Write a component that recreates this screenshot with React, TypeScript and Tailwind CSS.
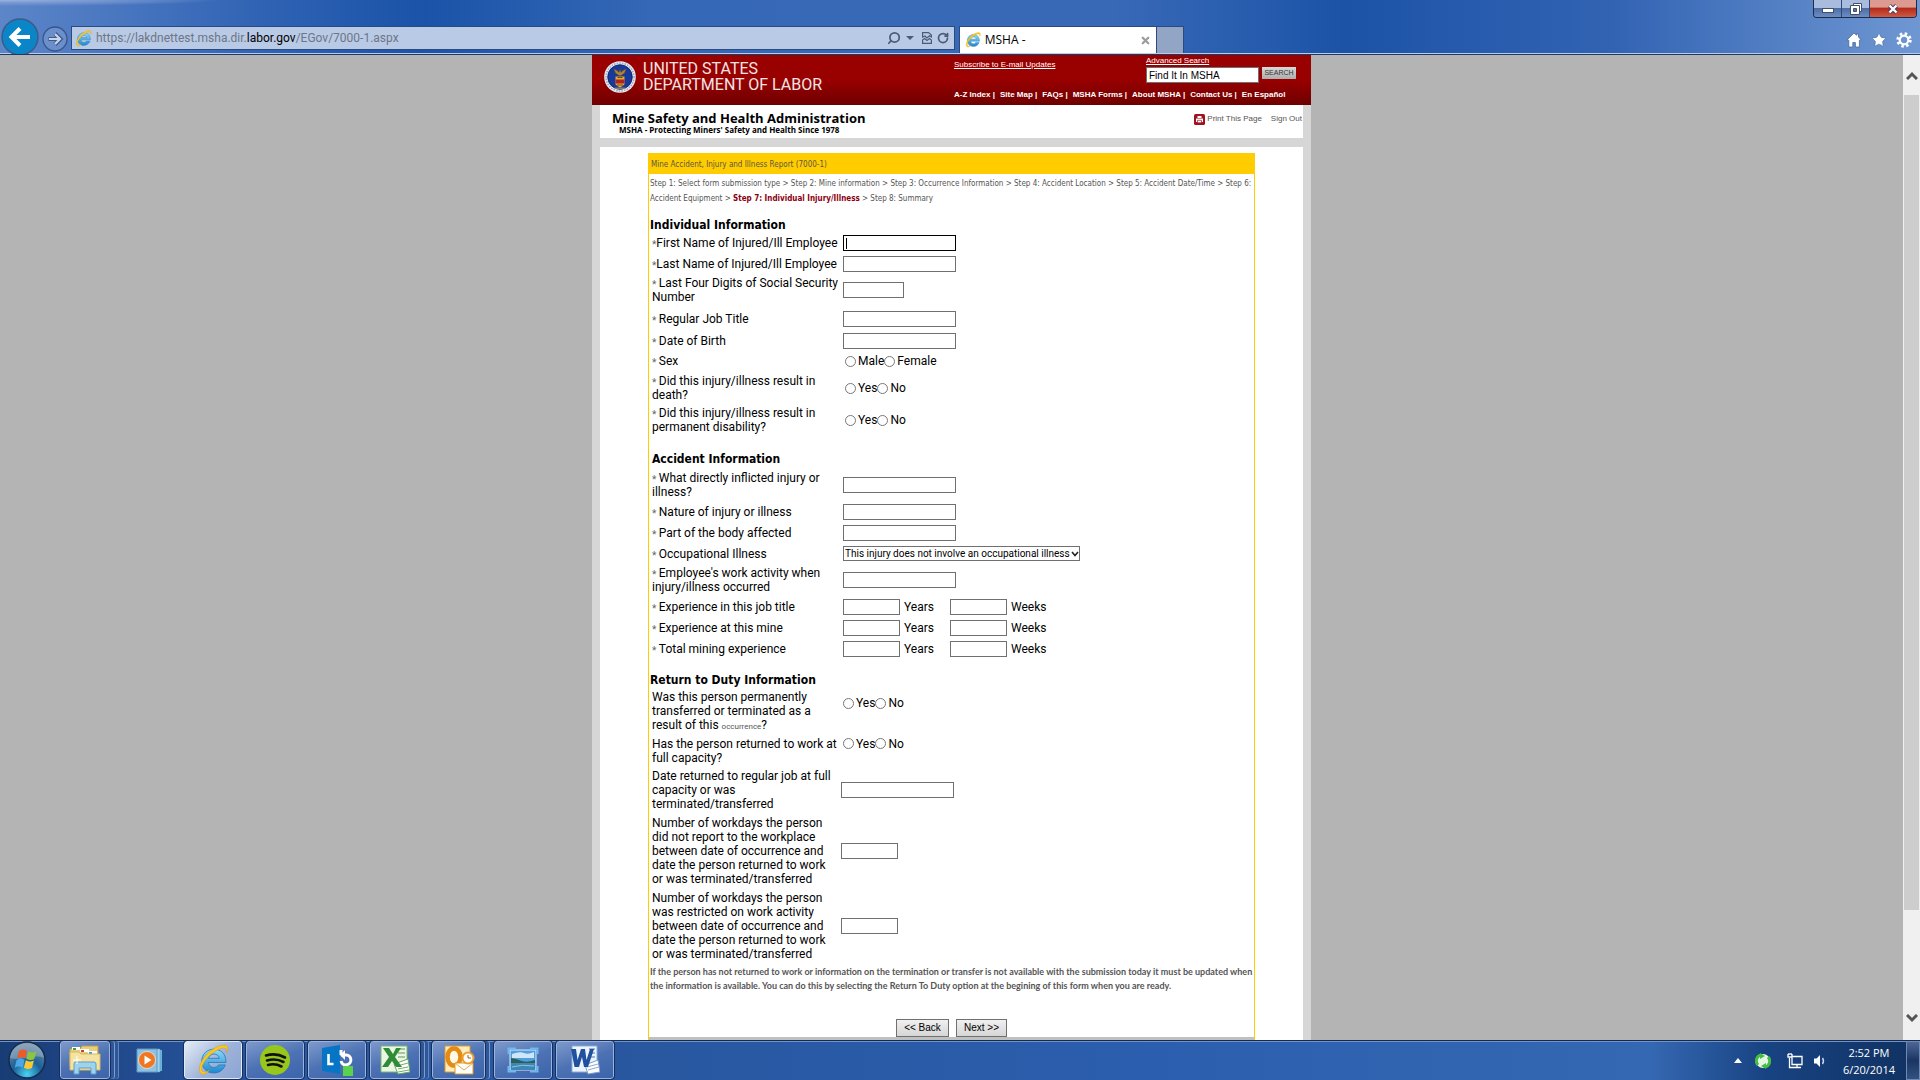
import React from 'react';
import { Search, RotateCw, Star, X } from 'lucide-react';

const injuryTextFields = 'h-4 border border-[#707070] bg-white px-1 text-[11px] outline-none';

function IeLogo({ className }: { className: string }) {
  return (
    <svg viewBox="0 0 32 32" className={className} aria-hidden="true">
      <defs>
        <linearGradient id="ieBlue" x1="0" y1="0" x2="0" y2="1">
          <stop offset="0" stopColor="#8fdcf8" />
          <stop offset="1" stopColor="#1d86cf" />
        </linearGradient>
      </defs>
      <path
        d="M29 18.5H11.5c.3 3 2.400 4.900 5.300 4.900 2.100 0 3.700-.9 4.700-2.500h6.800C26.500 26 22.200 29 16.700 29 9.800 29 4.700 24 4.700 17.200 4.700 10.300 9.900 5.200 16.800 5.200c7.500 0 12.400 5.300 12.200 13.300zM22.300 14.300c-.4-2.600-2.500-4.300-5.300-4.300s-4.900 1.700-5.400 4.300z"
        fill="url(#ieBlue)"
        stroke="#2779b8"
        strokeWidth="0.800"
      />
      <path
        d="M5 30C-1 27 4 14.500 13.500 7 20.500 1.500 28.500-.5 30.300 2.600c1 1.700.3 4-1 6.200.5-2.300.3-3.900-1-4.500-2.800-1.300-9 1.500-14.300 6C6.500 16.500 2.500 25.500 5.800 27.600c1.500.9 4 .1 6.700-1.400C9.700 29 7 30.900 5 30z"
        fill="#fcc81c"
        stroke="#d99b10"
        strokeWidth="0.500"
      />
    </svg>
  );
}

function LaborSeal() {
  return (
    <svg viewBox="0 0 32 32" className="size-8 shrink-0" aria-hidden="true">
      <circle cx="16" cy="16" r="15.800" fill="#e9ecf5" />
      <circle cx="16" cy="16" r="14" fill="none" stroke="#9aa3c4" strokeWidth="1.500" strokeDasharray="1.500 1.200" />
      <circle cx="16" cy="16" r="12.300" fill="#173a9a" stroke="#101c50" strokeWidth="0.800" />
      <path d="M10 8l3 1.500 2 2 1-3 1 3 2-2 3-1.500-1.500 4-3.500 2.500h-2L11.500 12z" fill="#b5842f" stroke="#70480f" strokeWidth="0.400" />
      <path d="M11.500 15.500h9V23c0 1-2 1.800-4.500 3.500-2.500-1.700-4.500-2.500-4.500-3.500z" fill="#e0a92f" />
      <path d="M11.500 18.500h9v4h-9z" fill="#b8202c" />
      <path d="M13.500 16.500h5M13 20h2m2 1h2M13 24h6" stroke="#6c4212" strokeWidth="0.900" />
      <path d="M10.500 27.200h11" stroke="#c9a24d" strokeWidth="1" />
    </svg>
  );
}

function PrinterIcon() {
  return (
    <svg viewBox="0 0 11 11" className="h-[11px] w-[11px]" aria-hidden="true">
      <rect width="11" height="11" rx="1.500" fill="#a31120" />
      <path d="M3.500 2h4v2h-4z" fill="#fff" />
      <path d="M2 4.500h7V8H2z" fill="#fff" />
      <path d="M3.500 6.300h4v2.500h-4z" fill="#fff" stroke="#a31120" strokeWidth="0.700" />
    </svg>
  );
}

function Browser() {
  return (
    <header className="relative flex h-[55px] shrink-0 items-end overflow-hidden border-b border-[#1f3864] bg-[radial-gradient(ellipse_at_0%_0%,#9bb3e0_0,#7a9ad3_90px,transparent_220px),linear-gradient(90deg,#5d86c9_0%,#2f62b3_14%,#1a53a8_22%,#3568b6_34%,#3869b7_58%,#1c53a7_70%,#3263b3_84%,#6f97d2_100%)]">
      <div className="flex h-7 w-full items-stretch border-b border-[#b9cdeb]">
        <button aria-label="Back" className="relative w-10 shrink-0">
          <svg viewBox="0 0 38 38" className="absolute -top-2 left-px size-[38px]" aria-hidden="true">
            <circle cx="19" cy="19" r="18" fill="#0a86c8" stroke="#405a86" strokeWidth="1.500" />
            <path d="M29 19H11M19 10.500L10.500 19l8.500 8.500" fill="none" stroke="#fff" strokeWidth="4" />
          </svg>
        </button>
        <button aria-label="Forward" className="flex w-7 shrink-0 justify-end">
          <svg viewBox="0 0 26 26" className="size-[26px]" aria-hidden="true">
            <circle cx="13" cy="13" r="12" fill="#7f9fd4" fillOpacity="0.500" stroke="#3a5488" strokeWidth="1.300" />
            <path d="M6.500 13h11M13 7.500l5.500 5.500-5.500 5.500" fill="none" stroke="#405a86" strokeWidth="4.200" />
            <path d="M7 13h11M13 8l5 5-5 5" fill="none" stroke="#c6d5ee" strokeWidth="2.200" />
          </svg>
        </button>
        <div className="ml-[3px] flex h-6 min-w-0 flex-[879] items-center border border-[#2b4a7f] bg-[#b9cae7] pl-[3px] pr-[5px] text-[#4b5b78]">
          <IeLogo className="size-[17px]" />
          <div
            role="textbox"
            aria-label="Address"
            contentEditable
            suppressContentEditableWarning
            className="ml-1 flex-1 overflow-hidden whitespace-nowrap font-[Roboto,'Open_Sans',sans-serif] text-[12px] leading-4 text-[#6d7685] outline-none"
          >
            https://lakdnettest.msha.dir.<span className="text-black">labor.gov</span>/EGov/7000-1.aspx
          </div>
          <button aria-label="Search"><Search className="size-[14px] -scale-x-100" strokeWidth={3} /></button>
          <button aria-label="Show address list" className="ml-[5px]">
            <svg viewBox="0 0 8 4" className="h-1 w-2"><path d="M0 0h8L4 4z" fill="currentColor" /></svg>
          </button>
          <button aria-label="Compatibility view" className="ml-[8px]">
            <svg viewBox="0 0 10 12" className="h-3 w-[10px]" fill="none" stroke="currentColor" strokeWidth="1.200">
              <path d="M.6 5V.6h6L9.400 3v2L7.500 3.800 5 6 3 4zM.6 8l2-1.500L5 8.500l2.500-2 1.900 1.500v3.400H.6z" />
            </svg>
          </button>
          <button aria-label="Refresh" className="ml-[5px]"><RotateCw className="size-3" strokeWidth={3.500} /></button>
        </div>
        <div className="ml-1 flex flex-[227] items-stretch">
          <div className="flex flex-1 items-center border border-b-0 border-[#2b4a7f] bg-white pl-[5px] pr-[5px]">
            <IeLogo className="size-4" />
            <span className="ml-1 flex-1 font-['Open_Sans','Noto_Sans',sans-serif] text-[12px] text-black">MSHA -</span>
            <button aria-label="Close tab"><X className="size-[11px] text-[#9d9d9d]" strokeWidth={5} /></button>
          </div>
          <button aria-label="New tab" className="w-[27px] border border-b-0 border-l-0 border-[#2b4a7f] bg-[#93a5c4]" />
        </div>
        <div className="flex flex-[732] items-center justify-end gap-[9px] pr-2 text-white">
          <button aria-label="Home">
            <svg viewBox="0 0 16 16" className="size-4">
              <path d="M8 1L.8 8.200h2V15h4v-4.500h2.600V15h4V8.200h2L12.500 5V2h-2v1.200z" fill="#fff" stroke="#4a689f" strokeWidth="0.800" />
            </svg>
          </button>
          <button aria-label="Favorites"><Star className="size-4 stroke-[#4a689f]" fill="white" strokeWidth={1} /></button>
          <button aria-label="Tools">
            <svg viewBox="0 0 16 16" className="size-4" fill="none">
              <circle cx="8" cy="8" r="6.200" stroke="#fff" strokeWidth="3" strokeDasharray="2.430 2.430" />
              <circle cx="8" cy="8" r="4.300" stroke="#fff" strokeWidth="2.200" />
            </svg>
          </button>
        </div>
      </div>
      <div className="absolute right-[3px] top-0 flex h-[18px] w-[104px] overflow-hidden rounded-b border border-t-0 border-[#1d2c4c]">
        <button aria-label="Minimize" className="flex w-7 items-center justify-center border-r border-[#304774] bg-[linear-gradient(#a9bcdd_45%,#4d6da6_50%,#6d8dc2)]">
          <svg viewBox="0 0 12 5" className="mt-1 h-[5px] w-3"><rect x=".5" y=".5" width="11" height="4" fill="#fff" stroke="#44506b" /></svg>
        </button>
        <button aria-label="Restore" className="flex w-7 items-center justify-center border-r border-[#304774] bg-[linear-gradient(#a9bcdd_45%,#4d6da6_50%,#6d8dc2)]">
          <svg viewBox="0 0 12 12" className="size-3" fill="#fff" stroke="#44506b">
            <path d="M3.500.5h8v8h-8z" />
            <path d="M.5 2.500h9v9h-9z" />
            <path d="M3.500 5.500h3v3h-3z" fill="#5876ac" />
          </svg>
        </button>
        <button aria-label="Close" className="flex flex-1 items-center justify-center bg-[linear-gradient(#dc9a90_40%,#b42c1b_50%,#cf5a45)]">
          <svg viewBox="0 0 12 10" className="h-[10px] w-3">
            <path d="M2.500 1.500l7 7m0-7l-7 7" stroke="#44405a" strokeWidth="4.200" />
            <path d="M2.500 1.500l7 7m0-7l-7 7" stroke="#fff" strokeWidth="2.400" />
          </svg>
        </button>
      </div>
    </header>
  );
}

const siteLinks = ['A-Z Index', 'Site Map', 'FAQs', 'MSHA Forms', 'About MSHA', 'Contact Us', 'En Español'];

function SiteHeader() {
  return (
    <div className="flex h-[50px] shrink-0 justify-between bg-[linear-gradient(#990000_50%,#6e0000)] text-white">
      <div className="flex items-start pl-3 pt-[6px]">
        <LaborSeal />
        <div className="ml-[7px] font-[Roboto,sans-serif] text-[16px] leading-4 text-[#f4e4e4]">
          UNITED STATES
          <br />
          DEPARTMENT OF LABOR
        </div>
      </div>
      <div className="w-[357px] font-['Liberation_Sans',sans-serif]">
        <div className="flex justify-between pr-[15px]">
          <a href="#updates" className="mt-1 text-[8px] leading-3 underline">
            Subscribe to E-mail Updates
          </a>
          <div>
            <a href="#advanced" className="block text-[8px] leading-3 underline">
              Advanced Search
            </a>
            <div className="flex items-start gap-[3px]">
              <input
                aria-label="Search MSHA"
                defaultValue="Find It In MSHA"
                className="h-4 w-[113px] border border-[#707070] bg-white px-[2px] text-[10px] text-black outline-none"
              />
              <button className="h-3 w-[34px] bg-[linear-gradient(#d8d8d8,#adadad)] text-center text-[7px] leading-3 text-[#333]">
                SEARCH
              </button>
            </div>
          </div>
        </div>
        <nav className="mt-[6px] flex whitespace-nowrap text-[8px] font-bold leading-3">
          {siteLinks.map((link, i) => (
            <span key={link} className="mr-[5px]">
              <a href="#nav">{link}</a>
              {i < siteLinks.length - 1 && ' |'}
            </span>
          ))}
        </nav>
      </div>
    </div>
  );
}

type RowProps = {
  id?: string;
  label: React.ReactNode;
  height: string;
  required?: boolean;
  tight?: boolean;
  children: React.ReactNode;
};

function Row({ id, label, height, required, tight, children }: RowProps) {
  const content = (
    <>
      {required && <span className="align-[-1px] text-[10px] leading-none text-[#666]">{tight ? '*' : '* '}</span>}
      {label}
    </>
  );
  return (
    <div className={`flex items-center ${height}`}>
      {id ? (
        <label htmlFor={id} className="w-[191px] shrink-0 whitespace-pre">{content}</label>
      ) : (
        <span className="w-[191px] shrink-0 whitespace-pre">{content}</span>
      )}
      {children}
    </div>
  );
}

function Radios({ name, options, className = 'pl-[2px]' }: { name: string; options: string[]; className?: string }) {
  return (
    <div className={`flex items-center ${className}`}>
      {options.map((option) => (
        <label key={option} className="flex items-center gap-[2px]">
          <input
            type="radio"
            name={name}
            className="size-[11px] appearance-none rounded-full border border-[#777] bg-white checked:border-[3px]"
          />
          {option}
        </label>
      ))}
    </div>
  );
}

function Experience({ id, label }: { id: string; label: string }) {
  return (
    <Row id={id} required label={label} height="h-[21px]">
      <input id={id} className={`${injuryTextFields} w-[57px]`} />
      <span className="ml-1 w-[46px]">Years</span>
      <input aria-label={`${label}, weeks`} className={`${injuryTextFields} w-[57px]`} />
      <span className="ml-1">Weeks</span>
    </Row>
  );
}

function InjuryForm() {
  return (
    <form className="mx-12 flex-1 border-x border-[#ffcc00]" onSubmit={(e) => e.preventDefault()}>
      <h2 className="h-[21px] bg-[#ffcc00] pl-[2px] text-[8px] leading-6 text-[#5c5640]">
        Mine Accident, Injury and Illness Report (7000-1)
      </h2>
      <p className="whitespace-nowrap px-px pt-[2px] text-[8px] leading-[15px] text-[#555]">
        Step 1: Select form submission type &gt; Step 2: Mine information &gt; Step 3: Occurrence Information &gt; Step 4: Accident Location &gt; Step 5: Accident Date/Time &gt; Step 6:
        <br />
        Accident Equipment &gt; <b className="text-[#8b0010]">Step 7: Individual Injury/Illness</b> &gt; Step 8: Summary
      </p>

      <div className="px-[3px] font-[Roboto,sans-serif] text-[12px] leading-[14px] text-black">
        <h3 className="-ml-[2px] mt-[11px] h-[15px] font-['DejaVu_Sans_Condensed',sans-serif] font-bold leading-4">Individual Information</h3>
        <Row id="first" required tight label="First Name of Injured/Ill Employee" height="h-[21px]">
          <div className="relative flex">
            <input id="first" className="h-4 w-[113px] border border-black bg-white px-1 text-[11px] outline-none" />
            <span className="absolute left-[3px] top-[3px] h-[11px] w-px bg-black" />
          </div>
        </Row>
        <Row id="last" required tight label="Last Name of Injured/Ill Employee" height="h-[21px]">
          <input id="last" className={`${injuryTextFields} w-[113px]`} />
        </Row>
        <Row id="ssn" required label={'Last Four Digits of Social Security\nNumber'} height="h-8">
          <input id="ssn" className={`${injuryTextFields} w-[61px]`} />
        </Row>
        <Row id="job" required label="Regular Job Title" height="h-[26px]">
          <input id="job" className={`${injuryTextFields} w-[113px]`} />
        </Row>
        <Row id="dob" required label="Date of Birth" height="h-[18px]">
          <input id="dob" className={`${injuryTextFields} w-[113px]`} />
        </Row>
        <Row required label="Sex" height="h-[22px]">
          <Radios name="sex" options={['Male', 'Female']} />
        </Row>
        <Row required label={'Did this injury/illness result in\ndeath?'} height="h-8">
          <Radios name="death" options={['Yes', 'No']} />
        </Row>
        <Row required label={'Did this injury/illness result in\npermanent disability?'} height="h-8">
          <Radios name="disability" options={['Yes', 'No']} />
        </Row>

        <h3 className="mt-[13px] h-5 font-['DejaVu_Sans_Condensed',sans-serif] font-bold leading-5">Accident Information</h3>
        <Row id="cause" required label={'What directly inflicted injury or\nillness?'} height="h-8">
          <input id="cause" className={`${injuryTextFields} w-[113px]`} />
        </Row>
        <Row id="nature" required label="Nature of injury or illness" height="h-[21px]">
          <input id="nature" className={`${injuryTextFields} w-[113px]`} />
        </Row>
        <Row id="body" required label="Part of the body affected" height="h-[21px]">
          <input id="body" className={`${injuryTextFields} w-[113px]`} />
        </Row>
        <Row id="illness" required label="Occupational Illness" height="h-[21px]">
          <div className="relative flex w-[237px]">
            <select
              id="illness"
              className="h-[15px] w-full appearance-none border border-[#707070] bg-white pl-px font-[Roboto,sans-serif] text-[10px] leading-3 outline-none"
            >
              <option>This injury does not involve an occupational illness</option>
            </select>
            <svg viewBox="0 0 8 6" className="pointer-events-none absolute right-px top-[5px] h-[6px] w-2">
              <path d="M1 1l3 3.500L7 1" fill="none" stroke="#222" strokeWidth="1.600" />
            </svg>
          </div>
        </Row>
        <Row id="activity" required label={"Employee's work activity when\ninjury/illness occurred"} height="h-8">
          <input id="activity" className={`${injuryTextFields} w-[113px]`} />
        </Row>
        <Experience id="exp-job" label="Experience in this job title" />
        <Experience id="exp-mine" label="Experience at this mine" />
        <Experience id="exp-total" label="Total mining experience" />

        <h3 className="-ml-[2px] mt-[13px] h-4 font-['DejaVu_Sans_Condensed',sans-serif] font-bold leading-4">Return to Duty Information</h3>
        <Row
          label={<>Was this person permanently{'\n'}transferred or terminated as a{'\n'}result of this <span className="text-[8px] leading-none text-[#555]">occurrence</span>?</>}
          height="h-[46px]"
        >
          <Radios name="transferred" options={['Yes', 'No']} className="pb-4" />
        </Row>
        <Row label={'Has the person returned to work at\nfull capacity?'} height="h-[33px]">
          <Radios name="returned" options={['Yes', 'No']} className="pb-[14px]" />
        </Row>
        <Row id="date-returned" label={'Date returned to regular job at full\ncapacity or was\nterminated/transferred'} height="h-[46px]">
          <input id="date-returned" className={`${injuryTextFields} -ml-[2px] w-[113px]`} />
        </Row>
        <Row
          id="days-away"
          label={'Number of workdays the person\ndid not report to the workplace\nbetween date of occurrence and\ndate the person returned to work\nor was terminated/transferred'}
          height="h-[76px]"
        >
          <input id="days-away" className={`${injuryTextFields} -ml-[2px] w-[57px]`} />
        </Row>
        <Row
          id="days-restricted"
          label={'Number of workdays the person\nwas restricted on work activity\nbetween date of occurrence and\ndate the person returned to work\nor was terminated/transferred'}
          height="h-[74px]"
        >
          <input id="days-restricted" className={`${injuryTextFields} -ml-[2px] w-[57px]`} />
        </Row>
      </div>

      <p className="whitespace-nowrap px-px pt-[2px] font-[Lato,sans-serif] text-[9px] font-bold leading-[14px] text-[#555]">
        If the person has not returned to work or information on the termination or transfer is not available with the submission today it must be updated when
        <br />
        the information is available. You can do this by selecting the Return To Duty option at the begining of this form when you are ready.
      </p>
      <div className="mt-[26px] flex justify-center gap-[7px] border-b-[3px] border-[#c0c0c0] font-['Liberation_Sans',sans-serif] text-[10px] leading-4 text-black">
        <button className="w-[53px] border border-[#707070] bg-[linear-gradient(#f0f0f0,#d6d6d6)]">&lt;&lt; Back</button>
        <button className="w-[51px] border border-[#707070] bg-[linear-gradient(#f0f0f0,#d6d6d6)]">Next &gt;&gt;</button>
      </div>
    </form>
  );
}

function Scrollbar() {
  return (
    <div className="flex w-[17px] shrink-0 flex-col items-center bg-[#f0f0f0]">
      <svg viewBox="0 0 12 9" className="mt-4 h-[9px] w-3"><path d="M1 8l5-5 5 5" fill="none" stroke="#555" strokeWidth="3" /></svg>
      <div className="mt-[15px] w-[15px] grow-[815] bg-[#cdcdcd]" />
      <div className="grow-[104]" />
      <svg viewBox="0 0 12 9" className="mb-[17px] h-[9px] w-3"><path d="M1 1l5 5 5-5" fill="none" stroke="#555" strokeWidth="3" /></svg>
    </div>
  );
}

const taskButton = 'flex h-[38px] items-center justify-center rounded-[3px] border border-[#9cb4dc] bg-[linear-gradient(160deg,#7e9acb,#4d72b4_50%,#3b64ab)] outline outline-[#162f5e]';

function Taskbar() {
  return (
    <footer className="flex h-10 shrink-0 items-start border-t border-[#152a4e] bg-[linear-gradient(#6f94cc_0,#6f94cc_1px,transparent_1px),linear-gradient(90deg,#183c74_0%,#204a8c_6%,#2a58a3_16%,#28579f_32%,#2b5eae_60%,#3568b2_86%,#184382_92%,#103161_100%)] text-white">
      <button aria-label="Start" className="ml-2">
        <svg viewBox="0 0 38 38" className="size-[38px]">
          <defs>
            <radialGradient id="orb" cx="0.500" cy="0.900" r="0.800">
              <stop offset="0" stopColor="#49d3f5" />
              <stop offset="0.500" stopColor="#1c6098" />
              <stop offset="1" stopColor="#6384a0" />
            </radialGradient>
          </defs>
          <circle cx="19" cy="19" r="18" fill="url(#orb)" stroke="#142c4d" strokeWidth="1.500" />
          <path d="M2 17C4-3 34-3 36 17 27 12 12 21 2 17z" fill="#fff" fillOpacity="0.250" />
          <path d="M11 10c3-2 5-2 8-.2l-2 7.700c-3-1.600-5-1.500-8 .2z" fill="#ee5a28" />
          <path d="M20.300 10.300c3 1.500 5 1.600 8 .2l-2 7.600c-3 1.500-5 1.200-8-.3z" fill="#8cc63f" />
          <path d="M8.600 19c3-1.700 5-1.700 8-.2l-2 7.700c-3-1.500-5-1.500-8 .2z" fill="#4aa8e8" />
          <path d="M17.900 19.200c3 1.500 5 1.700 8 .3l-2 7.600c-3 1.500-5 1.200-8-.3z" fill="#fdc82f" />
        </svg>
      </button>
      <button aria-label="Windows Explorer" className={`${taskButton} ml-[14px] w-[50px] shadow-[4px_0_0_#2f5798,5px_0_0_#7e9cd0,8px_0_0_#2f5798,9px_0_0_#6484bd]`}>
        <svg viewBox="0 0 34 30" className="h-[30px] w-[34px]">
          <path d="M2 4h10l2-3h16v20H2z" fill="#e8cf7d" stroke="#c29f45" />
          <path d="M4 2h8v3H4zM12 4h9v3h-9zM20 6h9v3h-9z" fill="#fff" />
          <path d="M5 3h3v2H5z" fill="#39a339" /><path d="M13 5h3v2h-3z" fill="#d33c30" /><path d="M21 7h3v2h-3z" fill="#3b9be0" />
          <path d="M2 7h9l2 2h19v16H2z" fill="#f6e3a1" stroke="#d6b75f" />
          <path d="M6 29V19q0-2 2-2h18q2 0 2 2v10h-5v-6H11v6z" fill="#9fd2ec" stroke="#5b9fc9" />
          <path d="M9 11v8M5 15h8" stroke="#fff" />
        </svg>
      </button>
      <button aria-label="Media Player" className="ml-[22px] flex h-[38px] w-[36px] items-center justify-center">
        <svg viewBox="0 0 28 28" className="size-7">
          <path d="M22 4h4v21h-4z" fill="#6ab4dc" /><path d="M20 3h4v23h-4z" fill="#9ed2ec" stroke="#5399c5" strokeWidth=".5" />
          <path d="M1 3h20v23H1z" fill="#8fc2e2" stroke="#5c99c4" />
          <circle cx="11" cy="14" r="8.500" fill="#ef7622" stroke="#fff" strokeWidth=".6" /><path d="M8.500 9.500v9l7-4.500z" fill="#fff" />
        </svg>
      </button>
      <button aria-label="Internet Explorer" className="ml-4 flex h-[38px] w-[58px] items-center justify-center rounded-[3px] border border-[#e0e9f7] bg-[linear-gradient(135deg,#e4ebf6,#9db2d8_55%,#8ba5d3)] outline outline-[#162f5e]">
        <IeLogo className="size-8" />
      </button>
      <button aria-label="Spotify" className={`${taskButton} ml-1 w-[58px]`}>
        <svg viewBox="0 0 30 30" className="size-[30px]">
          <circle cx="15" cy="15" r="15" fill="#98c71b" />
          <path d="M6 10.500q10-3 19 2M7 15.500q9-2.500 16.500 1.500M8 20q7-2 13.500 1.500" fill="none" stroke="#111" strokeWidth="2.600" strokeLinecap="round" />
        </svg>
      </button>
      <button aria-label="Lync" className={`${taskButton} ml-1 w-[58px]`}>
        <svg viewBox="0 0 32 32" className="size-8">
          <path d="M1 4l18-3v29L1 27z" fill="#0675c5" />
          <path d="M7.500 10v10h5" fill="none" stroke="#fff" strokeWidth="2.600" />
          <path d="M20 6v5M20 17a5 5 0 1 0 4-6h-4" fill="none" stroke="#fff" strokeWidth="3" />
          <path d="M24 6l-5 5 5 5z" fill="#fff" />
          <path d="M22 22h10v10H22z" fill="#5bd24c" />
        </svg>
      </button>
      <button aria-label="Excel" className={`${taskButton} ml-1 w-[50px] shadow-[4px_0_0_#2f5798,5px_0_0_#7e9cd0,8px_0_0_#2f5798,9px_0_0_#6484bd]`}>
        <svg viewBox="0 0 30 30" className="size-[30px]">
          <path d="M1 1h26v26H1z" fill="#eaf5e4" stroke="#7ab873" />
          <path d="M18 4h7M18 8h7M18 12h7" stroke="#a0c898" strokeWidth="2" />
          <path d="M14 19l14-5 2 13-12 2z" fill="#fff" stroke="#68a860" />
          <path d="M17 21l11-3M18 24l10-2M18 27l11-2" stroke="#72ae6a" />
          <path d="M3 3h6l4 6 3-6h5l-6 9 7 10h-6l-4-6-4 6H2l7-10z" fill="#2f8b35" />
        </svg>
      </button>
      <button aria-label="Outlook" className={`${taskButton} ml-3 w-[53px] shadow-[4px_0_0_#2f5798,5px_0_0_#7e9cd0]`}>
        <svg viewBox="0 0 32 30" className="h-[30px] w-8">
          <path d="M2 1h25v26H2z" fill="#fcecc0" stroke="#e09a28" />
          <ellipse cx="11" cy="12" rx="6.500" ry="8.500" fill="#fff8e4" stroke="#e48b15" strokeWidth="4.500" />
          <path d="M12 18h18v11H12z" fill="#fff" stroke="#e09a28" /><path d="M12 18l9 7 9-7" fill="none" stroke="#e6a83d" />
          <circle cx="25" cy="13" r="5.500" fill="#fff" stroke="#e9a030" strokeWidth="2" /><path d="M25 10v3h3" fill="none" stroke="#a5600b" />
        </svg>
      </button>
      <button aria-label="Pictures" className={`${taskButton} ml-[9px] w-[58px]`}>
        <svg viewBox="0 0 32 28" className="h-7 w-8">
          <path d="M3 4h26v20H3z" fill="#4f9fe0" stroke="#d8eaf8" />
          <path d="M5 8q8-3 12-1t10-1v6H5z" fill="#cfe6f6" />
          <path d="M4 12q6 1 11 3t13-1v4H4z" fill="#2b6054" />
          <path d="M4 17h24v7H4z" fill="#3f86b4" /><path d="M5 21q10-3 22-1" fill="none" stroke="#8fc3de" />
          <path d="M1.500 8V2.500H9M23 2.500h7.500V8M30.500 20v5.500H23M9 25.500H1.500V20" fill="none" stroke="#6db8f0" strokeWidth="2" />
        </svg>
      </button>
      <button aria-label="Word" className={`${taskButton} ml-1 w-[58px]`}>
        <svg viewBox="0 0 30 30" className="size-[30px]">
          <path d="M2 1h25v26H2z" fill="#eef4fc" stroke="#8babdb" />
          <path d="M19 4h6M20 8h5M19 12h6" stroke="#9ab7df" strokeWidth="2" />
          <path d="M15 20l13-5 2 12-12 2z" fill="#fff" stroke="#7d9fd2" /><path d="M17 22l11-3M18 25l11-3" stroke="#8caad6" />
          <path d="M1 4h5l1.500 11L11 4h4l1.500 11L20 4h4l-6 18h-4l-2-10-3 10H4.500z" fill="#1f519f" />
        </svg>
      </button>

      <div className="ml-auto flex h-full items-center font-['Open_Sans','Noto_Sans',sans-serif]">
        <svg viewBox="0 0 8 5" className="mr-[13px] h-[5px] w-2"><path d="M0 5l4-5 4 5z" fill="#fff" /></svg>
        <svg viewBox="0 0 16 16" className="mr-4 size-4">
          <circle cx="8" cy="8" r="7" fill="#e6f7e4" />
          <path d="M3 12A6 6 0 0 1 6 2M13 4a6 6 0 0 1-3 10" fill="none" stroke="#43bd42" strokeWidth="3" />
          <path d="M5 0l5 3-5 3zM11 16l-5-3 5-3z" fill="#43bd42" />
        </svg>
        <svg viewBox="0 0 16 16" className="mr-[10px] size-4" fill="none" stroke="#fff" strokeWidth="1.300">
          <path d="M5 3.500h10v8H5zM8 14.500h6M10 12v2M2.500 5v9.500H8M1 1v3h4V1M2 0v2M4 0v2" />
        </svg>
        <svg viewBox="0 0 13 14" className="mr-[17px] h-[14px] w-[13px]">
          <path d="M1 4.500h2.500L7 1v12L3.500 9.500H1z" fill="#fff" /><path d="M9.500 4q2 3 0 6" fill="none" stroke="#cddaf0" strokeWidth="1.400" />
        </svg>
        <div className="mr-[11px] text-center text-[11px] leading-[17px]">
          2:52 PM
          <br />
          6/20/2014
        </div>
        <button aria-label="Show desktop" className="h-full w-[14px] border border-[#7089b3] bg-[linear-gradient(#4c6696,#1b3563_50%,#33527f)]" />
      </div>
    </footer>
  );
}

export default function App() {
  return (
    <div className="flex h-screen flex-col overflow-hidden font-['DejaVu_Sans_Condensed','Noto_Sans',sans-serif]">
      <Browser />
      <div className="flex min-h-0 flex-1 bg-[#b4b4b4]">
        <main className="flex flex-1 justify-center overflow-hidden">
          <div className="flex w-full max-w-[719px] flex-col">
            <SiteHeader />
            <div className="flex flex-1 flex-col bg-[#d6d6d6] px-2">
              <div className="flex h-[33px] shrink-0 justify-between bg-white pl-3 text-black">
                <div className="pt-[5px] font-['Open_Sans','Noto_Sans',sans-serif] font-bold">
                  <h1 className="text-[13px] leading-4">Mine Safety and Health Administration</h1>
                  <p className="pl-[7px] text-[8px] leading-[8px]">MSHA - Protecting Miners&apos; Safety and Health Since 1978</p>
                </div>
                <div className="flex h-7 items-center pr-px font-['Liberation_Sans',sans-serif] text-[8px] text-[#555]">
                  <PrinterIcon />
                  <a href="#print" className="ml-[2px]">Print This Page</a>
                  <a href="#signout" className="ml-[9px]">Sign Out</a>
                </div>
              </div>
              <div className="mt-[9px] flex flex-1 flex-col bg-white pt-[6px]">
                <InjuryForm />
              </div>
            </div>
          </div>
        </main>
        <Scrollbar />
      </div>
      <Taskbar />
    </div>
  );
}
